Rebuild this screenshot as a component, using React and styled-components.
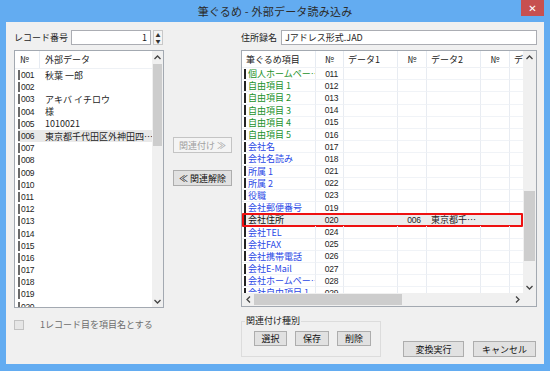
import React from 'react';
import styled, { createGlobalStyle, css } from 'styled-components';

const GlobalStyle = createGlobalStyle`
  html, body {
    margin: 0;
    padding: 0;
  }
  body {
    font-family: "Noto Sans CJK JP", "Noto Sans", sans-serif;
    font-size: 9px;
    color: #1e1e1e;
    overflow: hidden;
  }
  * {
    box-sizing: border-box;
  }
`;

const ROW_H = '12.2px';

const Window = styled.div`
  width: 550px;
  height: 371px;
  background: #63acf1;
  display: flex;
  flex-direction: column;
  padding: 0 6px 7px;
`;

const TitleBar = styled.div`
  height: 22px;
  display: grid;
  grid-template-columns: 1fr auto 1fr;
  align-items: start;
`;

const Title = styled.div`
  grid-column: 2;
  padding-top: 3px;
  font-size: 11px;
  color: #2b2b2b;
  letter-spacing: 0.2px;
`;

const CloseBtn = styled.div`
  grid-column: 3;
  justify-self: end;
  width: 23px;
  height: 16px;
  background: #c75050;
  color: #fff;
  font-family: "DejaVu Sans", sans-serif;
  font-weight: bold;
  font-size: 10px;
  display: flex;
  align-items: center;
  justify-content: center;
`;

const Body = styled.div`
  flex: 1;
  background: #f0f0f0;
  display: flex;
  padding: 8px 7px 0 8px;
`;

const Column = styled.div`
  width: ${(p) => p.$w}px;
  display: flex;
  flex-direction: column;
`;

const FieldRow = styled.div`
  height: 15px;
  display: flex;
  align-items: center;
`;

const Label = styled.div`
  width: ${(p) => p.$w}px;
  flex-shrink: 0;
  font-size: 9px;
`;

const TextBox = styled.div`
  width: ${(p) => (p.$w ? `${p.$w}px` : 'auto')};
  flex: ${(p) => (p.$w ? 'none' : 1)};
  height: 15px;
  background: #fff;
  border: 1px solid #abadb3;
  display: flex;
  align-items: center;
  justify-content: ${(p) => (p.$right ? 'flex-end' : 'flex-start')};
  padding: 0 3px;
  font-size: 9px;
`;

const Spinner = styled.div`
  width: 10px;
  height: 15px;
  margin-left: 2px;
  border: 1px solid #c8c8c8;
  background: #f4f4f4;
  display: flex;
  flex-direction: column;
  align-items: center;
  justify-content: space-around;
  font-size: 5px;
  line-height: 5px;
  color: #333;
`;

const ListBox = styled.div`
  margin-top: 5px;
  height: ${(p) => p.$h}px;
  background: #fff;
  border: 1px solid #a3a9b1;
  display: flex;
  flex-direction: column;
  overflow: hidden;
`;

const ListTop = styled.div`
  flex: 1;
  display: flex;
  min-height: 0;
`;

const ListMain = styled.div`
  flex: 1;
  overflow: hidden;
  min-width: 0;
`;

const ListHeader = styled.div`
  height: 18px;
  display: flex;
  align-items: center;
  border-bottom: 1px solid #eef1f5;
`;

const HeadCell = styled.div`
  width: ${(p) => p.$w}px;
  flex-shrink: 0;
  height: 100%;
  display: flex;
  align-items: center;
  justify-content: ${(p) => (p.$center ? 'center' : 'flex-start')};
  padding-left: ${(p) => (p.$center ? 0 : p.$pad ?? 4)}px;
  border-right: ${(p) => (p.$noline ? 'none' : '1px solid #e6ebf2')};
  white-space: nowrap;
  overflow: hidden;
  font-size: 9px;
  color: #222;
`;

const LeftRow = styled.div`
  height: ${ROW_H};
  margin-left: 3px;
  display: flex;
  align-items: center;
  background: ${(p) => (p.$sel ? '#e9e9e9' : 'transparent')};
`;

const Marker = styled.div`
  width: 2px;
  height: 10px;
  background: ${(p) => p.$c || '#6a6a6a'};
  flex-shrink: 0;
`;

const LeftNo = styled.div`
  width: 25px;
  padding-left: 1px;
  font-family: "Liberation Sans", sans-serif;
  font-size: 8.5px;
  letter-spacing: -0.3px;
`;

const LeftData = styled.div`
  flex: 1;
  white-space: nowrap;
  overflow: hidden;
  font-size: 9px;
`;

const VScroll = styled.div`
  width: ${(p) => p.$w}px;
  flex-shrink: 0;
  background: #f0f0f0;
  display: flex;
  flex-direction: column;
`;

const Arrow = styled.div`
  height: 12px;
  display: flex;
  align-items: center;
  justify-content: center;
  color: #555;
`;

const Track = styled.div`
  flex: 1;
  display: flex;
  flex-direction: column;
  padding: ${(p) => p.$pad};
`;

const Thumb = styled.div`
  background: #cdcdcd;
  height: ${(p) => p.$h}px;
  margin: 0 1px;
`;

const HScroll = styled.div`
  height: 13px;
  background: #f0f0f0;
  display: flex;
  align-items: stretch;
`;

const HArrow = styled.div`
  width: 12px;
  display: flex;
  align-items: center;
  justify-content: center;
  color: #555;
`;

const HTrack = styled.div`
  flex: 1;
  padding: 1px 0 1px ${(p) => p.$left}px;
  display: flex;
`;

const HThumb = styled.div`
  width: ${(p) => p.$w}px;
  background: #cdcdcd;
`;

const Corner = styled.div`
  width: 13px;
  background: #f0f0f0;
`;

const CheckRow = styled.div`
  margin-top: 10px;
  display: flex;
  align-items: center;
  gap: 16px;
  color: #6d6d6d;
`;

const CheckBox = styled.div`
  width: 10px;
  height: 10px;
  border: 1px solid #c2c2c2;
  background: #e6e6e6;
`;

const Button = styled.div`
  width: ${(p) => p.$w}px;
  height: ${(p) => p.$h || 16}px;
  flex-shrink: 0;
  border: 1px solid #adadad;
  background: #e1e1e1;
  display: flex;
  align-items: center;
  justify-content: center;
  font-size: 9px;
  color: #111;
  white-space: nowrap;
  ${(p) =>
    p.$disabled &&
    css`
      border-color: #c4c4c4;
      background: #f4f4f4;
      color: #a2a2a2;
    `}
`;

const MidButtons = styled.div`
  padding: 107px 0 0 9px;
  display: flex;
  flex-direction: column;
  gap: 17px;
`;

const Grid = styled.div`
  width: 281px;
  flex-shrink: 0;
  overflow: hidden;
`;

const gridCols = '74px 28px 54px 29px 54px 29px 40px';

const GridHead = styled.div`
  height: 17px;
  display: grid;
  grid-template-columns: ${gridCols};
  border-bottom: 1px solid #eef1f5;
`;

const GridRow = styled.div`
  height: ${ROW_H};
  display: grid;
  grid-template-columns: ${gridCols};
  position: relative;
  background: ${(p) => (p.$sel ? '#ececec' : 'transparent')};
  ${(p) =>
    p.$sel &&
    css`
      &::after {
        content: '';
        position: absolute;
        inset: -1px 0 -1px 0;
        border: 2px solid #ee1111;
        border-radius: 1px;
      }
    `}
`;

const Cell = styled.div`
  border-right: 1px solid #e8ecf2;
  border-bottom: 1px solid #f0f3f7;
  display: flex;
  align-items: center;
  white-space: nowrap;
  overflow: hidden;
  padding-left: ${(p) => p.$pad ?? 4}px;
  font-family: ${(p) =>
    p.$num ? '"Liberation Sans", sans-serif' : '"Noto Sans CJK JP", sans-serif'};
  font-size: ${(p) => (p.$num ? '8.5px' : '9px')};
  letter-spacing: ${(p) => (p.$num ? '-0.3px' : '0')};
  justify-content: ${(p) => (p.$center ? 'center' : 'flex-start')};
`;

const NameCell = styled(Cell)`
  padding-left: 2px;
  gap: 2px;
  color: ${(p) => p.$color};
`;

const Bottom = styled.div`
  margin-top: 8px;
  display: flex;
  align-items: flex-end;
`;

const Group = styled.fieldset`
  margin: 0;
  width: 140px;
  height: 42px;
  border: 1px solid #dcdcdc;
  padding: 0;
`;

const Legend = styled.legend`
  padding: 0 1px;
  margin-left: 3px;
  font-size: 9px;
  line-height: 12px;
`;

const GroupButtons = styled.div`
  padding: 4px 0 0 12px;
  display: flex;
  gap: 8px;
`;

const Actions = styled.div`
  margin-left: 22px;
  display: flex;
  gap: 9px;
`;

const leftRows = [
  ['001', '秋葉 一郎'],
  ['002', ''],
  ['003', 'アキバ イチロウ'],
  ['004', '様'],
  ['005', '1010021'],
  ['006', '東京都千代田区外神田四…', true],
  ['007'], ['008'], ['009'], ['010'], ['011'], ['012'], ['013'],
  ['014'], ['015'], ['016'], ['017'], ['018'], ['019'], ['020'],
];

const GREEN = '#23912a';
const BLUE = '#2a48e6';

const gridRows = [
  ['個人ホームペー…', '011', GREEN],
  ['自由項目 1', '012', GREEN],
  ['自由項目 2', '013', GREEN],
  ['自由項目 3', '014', GREEN],
  ['自由項目 4', '015', GREEN],
  ['自由項目 5', '016', GREEN],
  ['会社名', '017', BLUE],
  ['会社名読み', '018', BLUE],
  ['所属 1', '021', BLUE],
  ['所属 2', '022', BLUE],
  ['役職', '023', BLUE],
  ['会社郵便番号', '019', BLUE],
  ['会社住所', '020', '#111', '006', '東京都千…'],
  ['会社TEL', '024', BLUE],
  ['会社FAX', '025', BLUE],
  ['会社携帯電話', '026', BLUE],
  ['会社E-Mail', '027', BLUE],
  ['会社ホームペー…', '028', BLUE],
  ['会社自由項目 1', '029', BLUE],
];

const ChevUp = () => (
  <svg width="7" height="5" viewBox="0 0 7 5">
    <path d="M0.5 4 L3.5 1 L6.5 4" fill="none" stroke="#444" strokeWidth="1.3" />
  </svg>
);
const ChevDown = () => (
  <svg width="7" height="5" viewBox="0 0 7 5">
    <path d="M0.5 1 L3.5 4 L6.5 1" fill="none" stroke="#444" strokeWidth="1.3" />
  </svg>
);
const ChevLeft = () => (
  <svg width="5" height="7" viewBox="0 0 5 7">
    <path d="M4 0.5 L1 3.5 L4 6.5" fill="none" stroke="#444" strokeWidth="1.3" />
  </svg>
);
const ChevRight = () => (
  <svg width="5" height="7" viewBox="0 0 5 7">
    <path d="M1 0.5 L4 3.5 L1 6.5" fill="none" stroke="#444" strokeWidth="1.3" />
  </svg>
);

export default function App() {
  return (
    <>
      <GlobalStyle />
      <Window>
        <TitleBar>
          <Title>筆ぐるめ - 外部データ読み込み</Title>
          <CloseBtn>✕</CloseBtn>
        </TitleBar>
        <Body>
          <Column $w={150}>
            <FieldRow>
              <Label $w={57}>レコード番号</Label>
              <TextBox $w={80} $right>1</TextBox>
              <Spinner>
                <span>▲</span>
                <span>▼</span>
              </Spinner>
            </FieldRow>
            <ListBox $h={258}>
              <ListTop>
                <ListMain>
                  <ListHeader>
                    <HeadCell $w={25} $pad={5}>№</HeadCell>
                    <HeadCell $w={110} $pad={5} $noline>外部データ</HeadCell>
                  </ListHeader>
                  {leftRows.map(([no, data, sel]) => (
                    <LeftRow key={no} $sel={sel}>
                      <Marker />
                      <LeftNo>{no}</LeftNo>
                      <LeftData>{data}</LeftData>
                    </LeftRow>
                  ))}
                </ListMain>
                <VScroll $w={11}>
                  <Arrow><ChevUp /></Arrow>
                  <Track $pad="1px 0">
                    <Thumb $h={82} />
                  </Track>
                  <Arrow><ChevDown /></Arrow>
                </VScroll>
              </ListTop>
            </ListBox>
            <CheckRow>
              <CheckBox />
              <span>1レコード目を項目名とする</span>
            </CheckRow>
          </Column>

          <Column $w={77}>
            <MidButtons>
              <Button $w={59} $disabled>関連付け ≫</Button>
              <Button $w={59}>≪ 関連解除</Button>
            </MidButtons>
          </Column>

          <Column $w={296}>
            <FieldRow>
              <Label $w={40}>住所録名</Label>
              <TextBox>Jアドレス形式.JAD</TextBox>
            </FieldRow>
            <ListBox $h={257}>
              <ListTop>
                <Grid>
                  <GridHead>
                    <HeadCell $w={74}>筆ぐるめ項目</HeadCell>
                    <HeadCell $w={28} $center>№</HeadCell>
                    <HeadCell $w={54}>データ1</HeadCell>
                    <HeadCell $w={29} $center>№</HeadCell>
                    <HeadCell $w={54}>データ2</HeadCell>
                    <HeadCell $w={29} $center>№</HeadCell>
                    <HeadCell $w={40} $noline>データ3</HeadCell>
                  </GridHead>
                  {gridRows.map(([name, no, color, no1, d1]) => (
                    <GridRow key={no} $sel={!!no1}>
                      <NameCell $color={color}>
                        <Marker $c="#222" />
                        {name}
                      </NameCell>
                      <Cell $num $center>{no}</Cell>
                      <Cell />
                      <Cell $num $center>{no1}</Cell>
                      <Cell>{d1}</Cell>
                      <Cell />
                      <Cell />
                    </GridRow>
                  ))}
                </Grid>
                <VScroll $w={13}>
                  <Arrow><ChevUp /></Arrow>
                  <Track $pad="128px 0 0">
                    <Thumb $h={70} />
                  </Track>
                  <Arrow><ChevDown /></Arrow>
                </VScroll>
              </ListTop>
              <HScroll>
                <HArrow><ChevLeft /></HArrow>
                <HTrack $left={0}>
                  <HThumb $w={148} />
                </HTrack>
                <HArrow><ChevRight /></HArrow>
                <Corner />
              </HScroll>
            </ListBox>
            <Bottom>
              <Group>
                <Legend>関連付け種別</Legend>
                <GroupButtons>
                  <Button $w={33} $h={15}>選択</Button>
                  <Button $w={34} $h={15}>保存</Button>
                  <Button $w={34} $h={15}>削除</Button>
                </GroupButtons>
              </Group>
              <Actions>
                <Button $w={61} $h={16}>変換実行</Button>
                <Button $w={63} $h={16}>キャンセル</Button>
              </Actions>
            </Bottom>
          </Column>
        </Body>
      </Window>
    </>
  );
}
